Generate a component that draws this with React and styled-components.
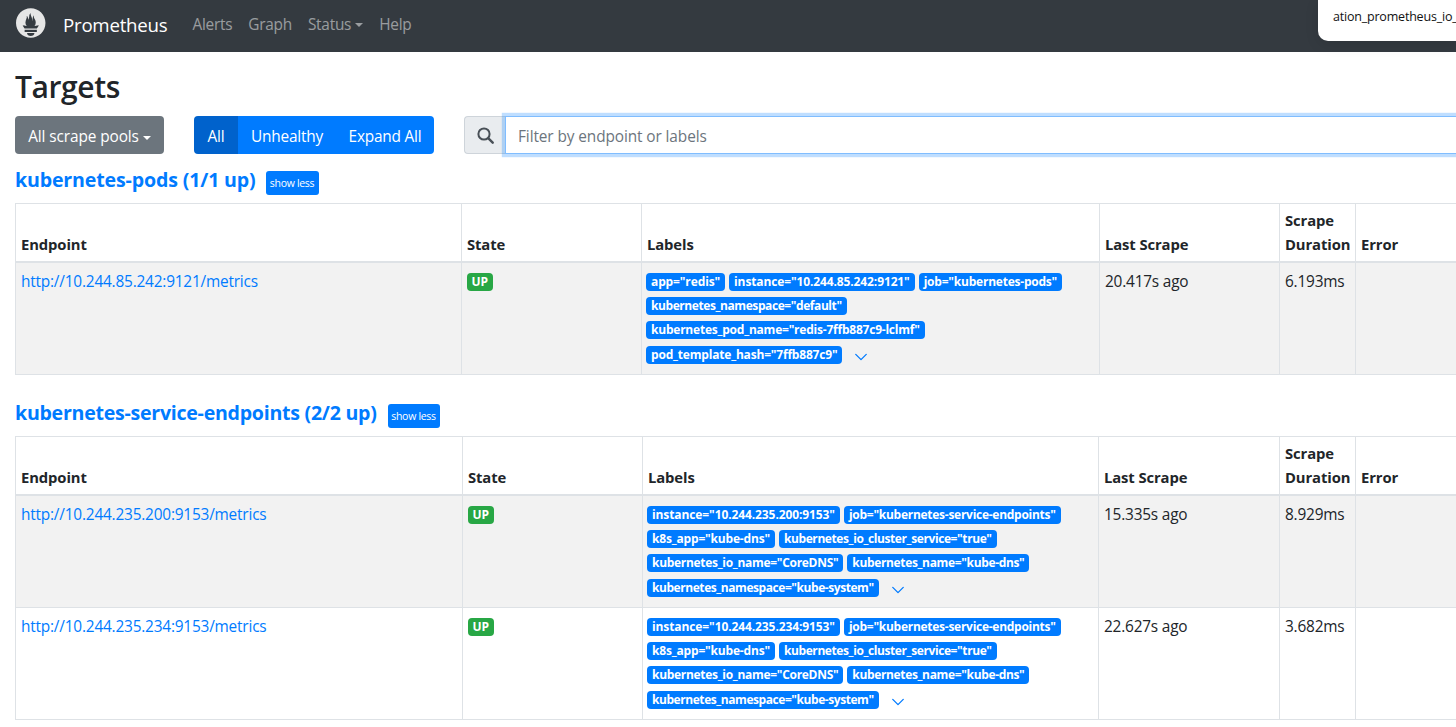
import React from "react";
import styled, { createGlobalStyle } from "styled-components";

const Global = createGlobalStyle`
  html, body { margin: 0; padding: 0; height: 727px; overflow: hidden; background: #fff; }
  body { font-family: "Open Sans", "Noto Sans", sans-serif; font-size: 16px; line-height: 24px; color: #212529; }
  * { box-sizing: border-box; }
`;
const Page = styled.div`width: 1456px; height: 727px; overflow: hidden; position: relative;`;
const Navbar = styled.nav`height: 52px; background: #343a40; display: flex; align-items: center; padding: 0 0 2px 16px;`;
const Brand = styled.a`
  display: flex; align-items: center; gap: 17px; color: #fff; font-size: 18.7px; letter-spacing: -0.25px; margin-right: 17px;
  svg { margin-bottom: 4px; }
`;
const NavLink = styled.a`color: rgba(255,255,255,.5); font-size: 15.4px; letter-spacing: -0.25px; padding: 0 8px; display: flex; align-items: center;`;
const Caret = styled.span`
  display: inline-block; margin-left: 4px; width: 0; height: 0; vertical-align: 2px;
  border-top: 4.5px solid currentColor; border-left: 4.5px solid transparent; border-right: 4.5px solid transparent;
`;
const Tooltip = styled.div`
  position: absolute; top: 0; left: 1318px; width: 138px; height: 41px; background: #fff;
  border-bottom-left-radius: 10px; box-shadow: 0 4px 14px rgba(0,0,0,.1);
  font-size: 12.5px; letter-spacing: -0.2px; color: #111; padding: 5px 0 0 15px; white-space: nowrap; overflow: hidden;
`;
const Content = styled.main`padding: 0 0 0 15px;`;
const Title = styled.h1`margin: 16px 0 10px; font-size: 30px; line-height: 38px; font-weight: 600; letter-spacing: -0.4px; color: #212529;`;
const Controls = styled.div`display: flex; align-items: center; height: 38px; margin-top: 10px;`;
const ScrapeBtn = styled.button`
  width: 149px; height: 38px; background: #6c757d; color: #fff; border: 0; border-radius: 4px;
  font: inherit; font-size: 15.4px; letter-spacing: -0.1px; padding: 4px 0 0 0; margin-right: 30px; white-space: nowrap;
`;
const Group = styled.div`display: flex; height: 38px; border-radius: 4px; overflow: hidden; margin-right: 30px;`;
const GroupBtn = styled.button`
  background: ${p => (p.$active ? "#0062cc" : "#007bff")}; color: #fff; border: 0; font: inherit;
  font-size: 15.4px; letter-spacing: -0.2px; width: ${p => p.$w}px; padding: 4px 0 0 0;
`;
const Search = styled.div`display: flex; flex: 1; height: 38px; min-width: 0;`;
const SearchIcon = styled.div`
  width: 41px; flex: none; background: #e9ecef; border: 1px solid #ced4da; border-right: 0;
  border-radius: 4px 0 0 4px; display: flex; align-items: center; justify-content: center; color: #495057;
`;
const Input = styled.div`
  flex: 1; border: 1px solid #80bdff; box-shadow: 0 0 0 3.2px rgba(0,123,255,.25); color: #6c757d;
  font-size: 15.4px; letter-spacing: -0.1px; line-height: 40px; padding-left: 12px; margin-right: -20px;
`;
const PoolHeader = styled.div`display: flex; align-items: center; height: 24px; margin-top: ${p => p.$mt}px;`;
const PoolName = styled.a`color: #007bff; font-weight: 700; font-size: 19.6px; letter-spacing: ${p => p.$ls}px; padding-bottom: 6px; white-space: nowrap;`;
const ShowBtn = styled.button`
  margin-left: ${p => p.$ml}px; height: 24px; width: ${p => p.$w}px; background: #007bff; color: #fff; border: 0; border-radius: 3px;
  font: inherit; font-size: 10.5px; letter-spacing: -0.3px; padding: 0; line-height: 24px;
`;
const Table = styled.table`
  border-collapse: collapse; table-layout: fixed; width: 1500px; margin-top: 8px;
  font-size: 15.4px; letter-spacing: -0.2px;
  td, th { border: 1px solid #dee2e6; vertical-align: top; padding: 5px; text-align: left; line-height: 24px; }
  th { vertical-align: bottom; font-weight: 700; border-bottom-width: 2px; font-size: 14.8px; letter-spacing: -0.1px; padding-top: 4px; }
  td { padding-top: 7px; }
`;
const Row = styled.tr`background: ${p => (p.$striped ? "#f2f2f2" : "#fff")};`;
const EndpointLink = styled.a`color: #007bff;`;
const Up = styled.span`
  display: inline-block; background: #28a745; color: #fff; font-weight: 700; font-size: 12px; letter-spacing: 0;
  line-height: 12px; padding: 3px 4.5px; border-radius: 4px; vertical-align: top; margin-top: 3px;
`;
const Labels = styled.div`padding-top: 3px; min-height: 99px; margin-left: -1px;`;
const LabelLine = styled.div`display: flex; align-items: center; height: 18px; margin-bottom: 6px; &:last-child { margin-bottom: 0; margin-top: 7px; }`;
const Badge = styled.span`
  display: inline-block; background: #007bff; color: #fff; font-weight: 700; font-size: 12px; letter-spacing: ${p => p.$ls}px;
  line-height: 18px; height: 18px; padding: 0 5px; border-radius: 4px; margin-right: 4px; white-space: nowrap;
`;
const Chevron = styled.svg`margin-left: 8px; margin-top: 3px; color: #007bff;`;

const Down = () => (
  <Chevron width="14" height="14" viewBox="0 0 16 16" fill="none" stroke="currentColor" strokeWidth="1.5" strokeLinecap="round" strokeLinejoin="round">
    <path d="M2 5l6 6 6-6" />
  </Chevron>
);
const Logo = () => (
  <svg width="30" height="30" viewBox="0 0 115.333 114">
    <path fill="#e6e6e6" fillRule="evenodd" d="M56.667.667C25.372.667 0 26.036 0 57.332c0 31.295 25.372 56.666 56.667 56.666s56.666-25.371 56.666-56.666S87.961.667 56.667.667zm0 106.055c-7.845 0-14.204-5.24-14.204-11.703h28.408c0 6.462-6.36 11.703-14.204 11.703zm23.46-15.578H33.204v-8.509h46.923v8.509zm-.168-12.888H33.339c-.155-.179-.314-.355-.464-.537-4.803-5.832-5.934-8.877-7.032-11.98-.019-.102 5.824 1.194 9.967 2.126 0 0 2.132.493 5.25 1.062-2.994-3.51-4.772-7.972-4.772-12.532 0-10.012 7.679-18.761 4.909-25.833 2.696.219 5.579 5.69 5.774 14.244 2.864-3.958 4.063-11.186 4.063-15.618 0-4.588 3.023-9.918 6.047-10.1-2.696 4.443.699 8.252 3.716 17.701 1.132 3.549.985 9.521 1.857 13.308.289-7.865 1.642-19.341 6.632-23.303-2.201 4.988.326 11.229 2.054 14.23 2.788 4.842 4.478 8.51 4.478 15.448 0 4.652-1.717 9.032-4.613 12.455 3.293-.618 5.567-1.175 5.567-1.175l10.694-2.086c.001-.001-1.553 6.386-7.508 12.59z" />
  </svg>
);

const Labelset = ({ lines }) => (
  <Labels>
    {lines.map((line, i) => (
      <LabelLine key={i}>
        {line.map(([t, ls]) => <Badge key={t} $ls={ls}>{t}</Badge>)}
        {i === lines.length - 1 && <Down />}
      </LabelLine>
    ))}
  </Labels>
);

const Head = () => (
  <thead>
    <tr>
      <th>Endpoint</th><th>State</th><th>Labels</th><th>Last Scrape</th><th>Scrape Duration</th><th>Error</th>
    </tr>
  </thead>
);
const Cols = ({ w }) => <colgroup>{w.map((x, i) => <col key={i} style={{ width: x }} />)}</colgroup>;

const dnsLines = ip => [
  [[`instance="10.244.235.${ip}:9153"`, -0.1], ['job="kubernetes-service-endpoints"', -0.27]],
  [['k8s_app="kube-dns"', -0.18], ['kubernetes_io_cluster_service="true"', -0.4]],
  [['kubernetes_io_name="CoreDNS"', -0.3], ['kubernetes_name="kube-dns"', -0.35]],
  [['kubernetes_namespace="kube-system"', -0.44]],
];

export default function App() {
  return (
    <Page>
      <Global />
      <Navbar>
        <Brand><Logo />Prometheus</Brand>
        <NavLink>Alerts</NavLink>
        <NavLink>Graph</NavLink>
        <NavLink>Status<Caret /></NavLink>
        <NavLink>Help</NavLink>
      </Navbar>
      <Tooltip>ation_prometheus_io_scrape</Tooltip>
      <Content>
        <Title>Targets</Title>
        <Controls>
          <ScrapeBtn>All scrape pools<Caret /></ScrapeBtn>
          <Group>
            <GroupBtn $active $w={44}>All</GroupBtn>
            <GroupBtn $w={98}>Unhealthy</GroupBtn>
            <GroupBtn $w={98}>Expand All</GroupBtn>
          </Group>
          <Search>
            <SearchIcon>
              <svg width="17" height="17" viewBox="0 0 17 17" fill="none" stroke="currentColor" strokeLinecap="round">
                <circle cx="7" cy="7" r="5.6" strokeWidth="2" />
                <path d="M11.4 11.4l4.3 4.3" strokeWidth="2.4" />
              </svg>
            </SearchIcon>
            <Input>Filter by endpoint or labels</Input>
          </Search>
        </Controls>
        <PoolHeader $mt={17}>
          <PoolName $ls={-0.16}>kubernetes-pods (1/1 up)</PoolName>
          <ShowBtn $ml={10} $w={53}>show less</ShowBtn>
        </PoolHeader>
        <Table>
          <Cols w={[446, 180, 458, 180, 76, 160]} />
          <Head />
          <tbody>
            <Row $striped>
              <td><EndpointLink>http://10.244.85.242:9121/metrics</EndpointLink></td>
              <td><Up>UP</Up></td>
              <td>
                <Labelset lines={[
                  [['app="redis"', -0.12], ['instance="10.244.85.242:9121"', -0.12], ['job="kubernetes-pods"', -0.22]],
                  [['kubernetes_namespace="default"', -0.42]],
                  [['kubernetes_pod_name="redis-7ffb887c9-lclmf"', -0.22]],
                  [['pod_template_hash="7ffb887c9"', -0.19]],
                ]} />
              </td>
              <td>20.417s ago</td>
              <td>6.193ms</td>
              <td></td>
            </Row>
          </tbody>
        </Table>
        <PoolHeader $mt={29}>
          <PoolName $ls={-0.27}>kubernetes-service-endpoints (2/2 up)</PoolName>
          <ShowBtn $ml={11} $w={52}>show less</ShowBtn>
        </PoolHeader>
        <Table>
          <Cols w={[447, 180, 456, 181, 76, 160]} />
          <Head />
          <tbody>
            <Row $striped>
              <td><EndpointLink>http://10.244.235.200:9153/metrics</EndpointLink></td>
              <td><Up>UP</Up></td>
              <td><Labelset lines={dnsLines(200)} /></td>
              <td>15.335s ago</td>
              <td>8.929ms</td>
              <td></td>
            </Row>
            <Row>
              <td><EndpointLink>http://10.244.235.234:9153/metrics</EndpointLink></td>
              <td><Up>UP</Up></td>
              <td><Labelset lines={dnsLines(234)} /></td>
              <td>22.627s ago</td>
              <td>3.682ms</td>
              <td></td>
            </Row>
          </tbody>
        </Table>
      </Content>
    </Page>
  );
}
